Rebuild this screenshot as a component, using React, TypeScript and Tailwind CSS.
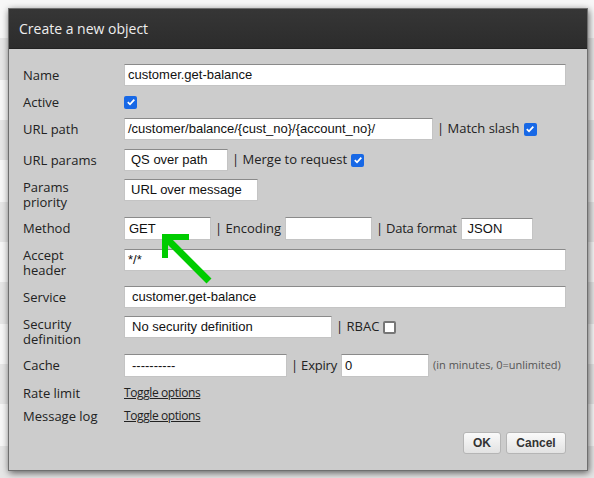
import React from "react";

const label = "w-[101px] shrink-0 text-[13px] leading-[15px] text-[#222]";
const field =
  "h-[22px] shrink-0 bg-white border border-[#c4c4c4] border-t-[#8a8a8a] text-[13px] text-[#111] flex items-center font-['Liberation_Sans',Arial,sans-serif]";
const sep = "text-[13px] text-[#222] whitespace-nowrap";

function Check({ on }: { on: boolean }) {
  return on ? (
    <span className="block shrink-0 w-[13px] h-[13px] rounded-[2px] bg-[#1768e6] flex items-center justify-center">
      <svg width="10" height="10" viewBox="0 0 10 10">
        <path d="M1.8 5.2 L4 7.3 L8.3 2.6" stroke="white" strokeWidth="1.8" fill="none" />
      </svg>
    </span>
  ) : (
    <span className="block shrink-0 w-[13px] h-[13px] rounded-[2px] bg-white border-2 border-[#767676]" />
  );
}

export default function App() {
  const bands = [38, 42, 40, 40, 42, 40, 40, 42, 40, 40, 42, 40];

  return (
    <div className="relative w-[594px] h-[478px] overflow-hidden bg-[#f6f6f6] font-['Open_Sans','Noto_Sans',sans-serif]">
      {/* page behind the dialog */}
      <div className="flex flex-col">
        {bands.map((h, i) => (
          <div
            key={i}
            style={{ height: h }}
            className={i % 2 === 0 ? "bg-[#f7f7f7]" : "bg-[#e6e6e6]"}
          />
        ))}
      </div>

      {/* Dialog */}
      <div className="absolute left-[8px] top-[8px] w-[580px] h-[463px] border border-[#6f6f6f] bg-[#cccccc] shadow-[1px_2px_7px_rgba(0,0,0,0.6)] flex flex-col">
        <div className="h-[40px] bg-gradient-to-b from-[#363636] to-[#2c2c2c] border-b border-[#222] flex items-center pl-[10px] text-[14px] text-[#eeeeee]">
          Create a new object
        </div>

        <div className="pl-[14px] pr-[21px] pt-[15px] flex flex-col">
          {/* Name */}
          <div className="flex items-center h-[22px]">
            <span className={label}>Name</span>
            <div className={`${field} w-[442px] pl-[3px]`}>customer.get-balance</div>
          </div>

          {/* Active */}
          <div className="flex items-center h-[22px] mt-[5px]">
            <span className={label}>Active</span>
            <Check on />
          </div>

          {/* URL path */}
          <div className="flex items-center h-[22px] mt-[5px]">
            <span className={label}>URL path</span>
            <div className="flex items-center gap-[4px]">
              <div className={`${field} w-[309px] pl-[3px]`}>/customer/balance/{"{cust_no}"}/{"{account_no}"}/</div>
              <span className={sep}>| Match slash</span>
              <Check on />
            </div>
          </div>

          {/* URL params */}
          <div className="flex items-center h-[22px] mt-[9px]">
            <span className={label}>URL params</span>
            <div className="flex items-center gap-[4px]">
              <div className={`${field} h-[21px] w-[104px] pl-[6px]`}>QS over path</div>
              <span className={sep}>| Merge to request</span>
              <Check on />
            </div>
          </div>

          {/* Params priority */}
          <div className="flex items-start h-[30px] mt-[8px]">
            <span className={`${label} pt-[1px]`}>
              Params
              <br />
              priority
            </span>
            <div className={`${field} h-[21px] w-[134px] pl-[6px]`}>URL over message</div>
          </div>

          {/* Method */}
          <div className="flex items-center h-[23px] mt-[8px]">
            <span className={label}>Method</span>
            <div className="flex items-center gap-[4px]">
              <div className={`${field} h-[23px] w-[87px] pl-[4px]`}>GET</div>
              <span className={sep}>| Encoding</span>
              <div className={`${field} h-[23px] w-[87px]`} />
              <span className={`${sep} tracking-[-0.25px]`}>| Data format</span>
              <div className={`${field} w-[72px] pl-[6px]`}>JSON</div>
            </div>
          </div>

          {/* Accept header */}
          <div className="flex items-start h-[30px] mt-[8px]">
            <span className={label}>
              Accept
              <br />
              header
            </span>
            <div className={`${field} w-[442px] pl-[3px] mt-px`}>*/*</div>
          </div>

          {/* Service */}
          <div className="flex items-center h-[22px] mt-[8px]">
            <span className={label}>Service</span>
            <div className={`${field} h-[21px] w-[442px] pl-[7px]`}>customer.get-balance</div>
          </div>

          {/* Security definition */}
          <div className="flex items-start h-[30px] mt-[8px]">
            <span className={`${label} pt-[1px]`}>
              Security
              <br />
              definition
            </span>
            <div className="flex items-center gap-[4px]">
              <div className={`${field} w-[208px] pl-[7px]`}>No security definition</div>
              <span className={sep}>| RBAC</span>
              <Check on={false} />
            </div>
          </div>

          {/* Cache */}
          <div className="flex items-center h-[23px] mt-[8px]">
            <span className={label}>Cache</span>
            <div className="flex items-center gap-[4px]">
              <div className={`${field} h-[23px] w-[163px] pl-[7px]`}>----------</div>
              <span className={`${sep} tracking-[-0.2px]`}>| Expiry</span>
              <div className={`${field} h-[23px] w-[88px] pl-[3px]`}>0</div>
              <span className="text-[11px] text-[#555] whitespace-nowrap">(in minutes, 0=unlimited)</span>
            </div>
          </div>

          {/* Rate limit */}
          <div className="flex items-center h-[18px] mt-[7px]">
            <span className={label}>Rate limit</span>
            <a className="text-[12px] tracking-[-0.4px] text-[#222] underline cursor-pointer">Toggle options</a>
          </div>

          {/* Message log */}
          <div className="flex items-center h-[18px] mt-[5px]">
            <span className={label}>Message log</span>
            <a className="text-[12px] tracking-[-0.4px] text-[#222] underline cursor-pointer">Toggle options</a>
          </div>

          {/* Buttons */}
          <div className="flex justify-end gap-[5px] mt-[7px] font-['Liberation_Sans',Arial,sans-serif]">
            <button className="w-[38px] h-[22px] rounded-[3px] border border-[#b5b5b5] bg-gradient-to-b from-[#fafafa] to-[#e2e2e2] text-[12px] font-bold text-[#333]">
              OK
            </button>
            <button className="w-[60px] h-[22px] rounded-[3px] border border-[#b5b5b5] bg-gradient-to-b from-[#fafafa] to-[#e2e2e2] text-[12px] font-bold text-[#333]">
              Cancel
            </button>
          </div>
        </div>
      </div>

      {/* green annotation arrow */}
      <svg className="absolute left-0 top-0 pointer-events-none" width="594" height="478">
        <polyline points="165,258 165,237 189,237" stroke="#00cc00" strokeWidth="6" fill="none" />
        <line x1="166" y1="238" x2="209" y2="281" stroke="#00cc00" strokeWidth="7" />
      </svg>
    </div>
  );
}
